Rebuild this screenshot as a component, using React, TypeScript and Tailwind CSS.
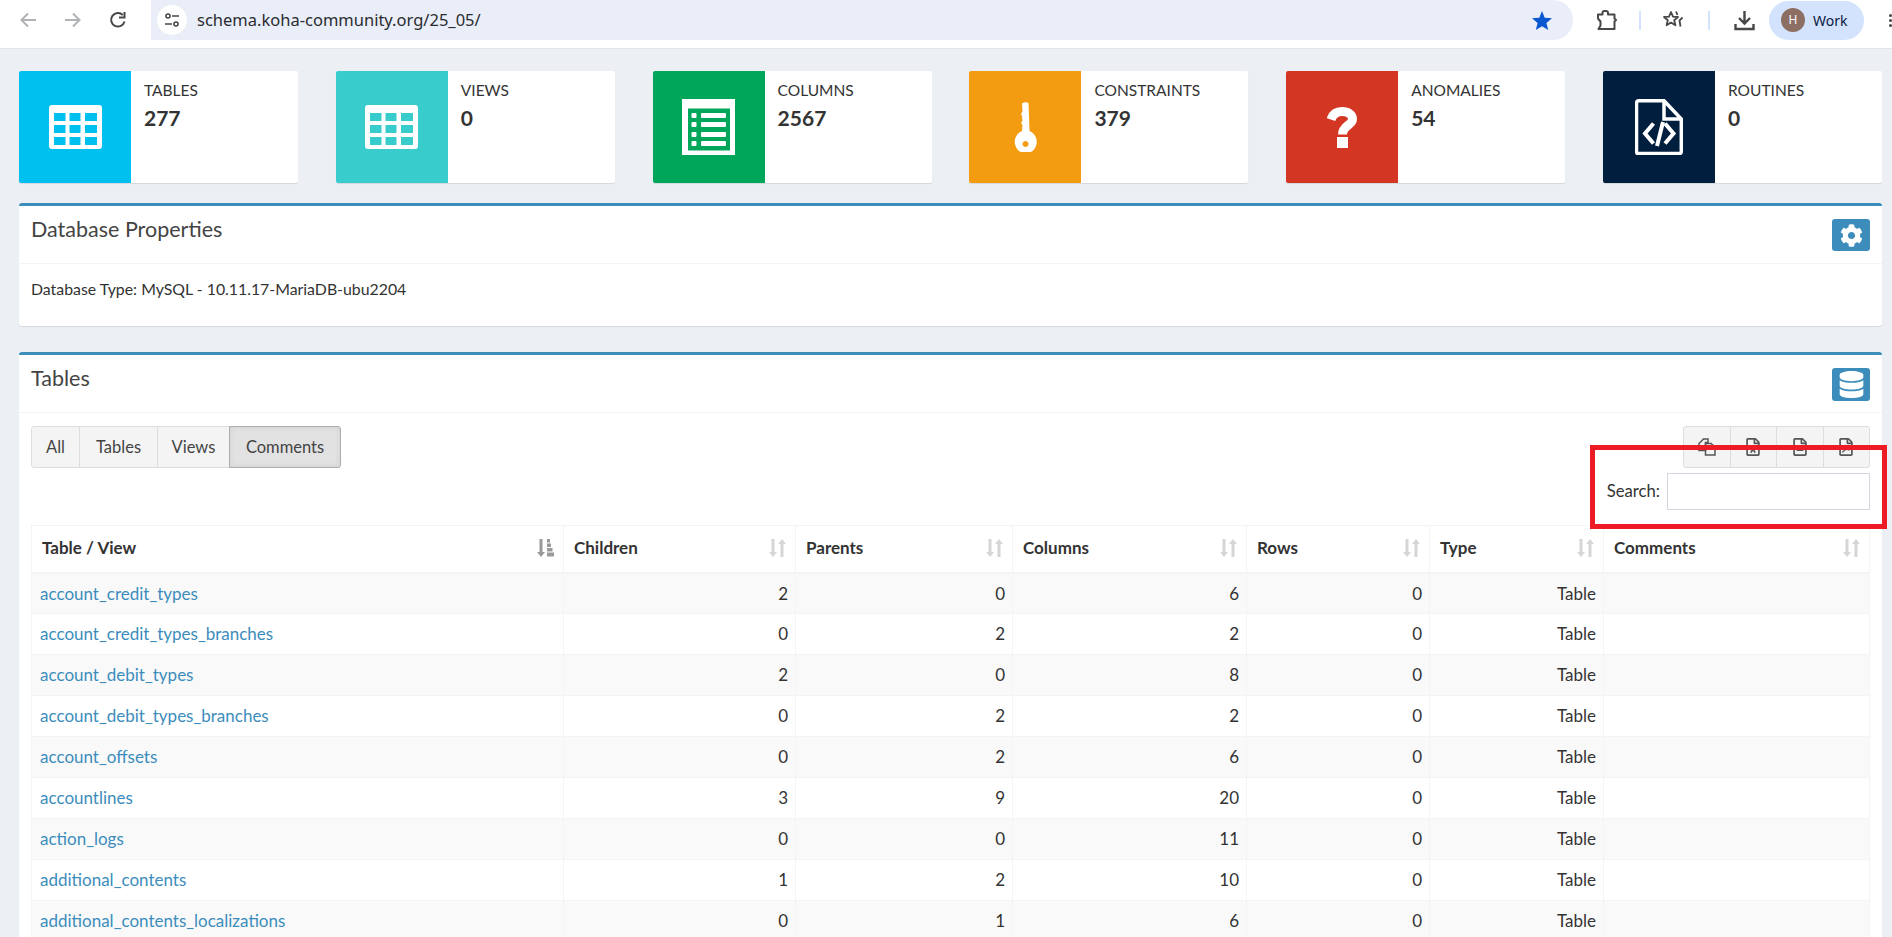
import React from "react";
import { FaCog, FaDatabase, FaRegFileExcel, FaRegFileAlt, FaRegFilePdf } from "react-icons/fa";

const font = "font-['Lato','Liberation_Sans',sans-serif]";

function TableIcon() {
  return (
    <svg width="53" height="44" viewBox="0 0 53 44" fill="#fff" fillRule="evenodd">
      <path d="M3 0h47a3 3 0 0 1 3 3v38a3 3 0 0 1-3 3H3a3 3 0 0 1-3-3V3a3 3 0 0 1 3-3zM5 8v8h11.500V8zM20.500 8v8h11V8zM36 8v8h12V8zM5 20v8h11.500v-8zM20.500 20v8h11v-8zM36 20v8h12v-8zM5 32v8h11.500v-8zM20.500 32v8h11v-8zM36 32v8h12v-8z" />
    </svg>
  );
}

function ListAlt() {
  return (
    <svg width="53" height="56" viewBox="0 0 53 56">
      <path fillRule="evenodd" fill="#fff" d="M0 0h53v56H0zM6 9.500V51.500h42V9.500z" />
      <g fill="#fff">
        <rect x="9.500" y="14" width="5" height="5" rx="1" /><rect x="19" y="14" width="25" height="5" rx="1" />
        <rect x="9.500" y="23" width="5" height="5" rx="1" /><rect x="19" y="23" width="25" height="5" rx="1" />
        <rect x="9.500" y="33" width="5" height="5" rx="1" /><rect x="19" y="33" width="25" height="5" rx="1" />
        <rect x="9.500" y="42" width="5" height="5" rx="1" /><rect x="19" y="42" width="25" height="5" rx="1" />
      </g>
    </svg>
  );
}

function KeyIcon() {
  return (
    <svg width="23" height="50" viewBox="0 0 23 50" fill="#fff" fillRule="evenodd">
      <path d="M8 1.500Q11 -0.500 14.500 1L15.500 29A11 11.500 0 1 1 8 29L8.500 23L7 21L8.500 18.500L8 14L7 12L8.500 9.500zM11.500 39a3 3 0 1 0 0.010 0z" />
    </svg>
  );
}

function QuestionIcon() {
  return (
    <svg width="30" height="41" viewBox="0 0 30 41" fill="none">
      <path d="M4 12.500C6 6.500 10 4.500 15 4.500C21 4.500 25.500 7.500 25.500 12C25.500 18.500 15.500 18 15.500 27.500" stroke="#fff" strokeWidth="9" />
      <rect x="10" y="30" width="11" height="11" fill="#fff" />
    </svg>
  );
}

function FileCodeIcon() {
  return (
    <svg width="48" height="56" viewBox="0 0 48 56" fill="none" stroke="#fff" strokeWidth="3.500">
      <path d="M4 1.700H29L46.300 20V52.500a2 2 0 0 1-2 2H3.500a2 2 0 0 1-2-2V4a2.500 2.500 0 0 1 2.500-2.300z" />
      <path d="M29 2V20H46" />
      <path d="M18.500 24.500L10 34.500L18.500 44.500M30 24.500L38.500 34.500L30 44.500" strokeWidth="4" />
      <path d="M28 23L22 47" strokeWidth="4" />
    </svg>
  );
}

function CopyIcon() {
  return (
    <svg width="18" height="18" viewBox="0 0 18 18" fill="none" stroke="#555" strokeWidth="1.500">
      <path d="M5.500 1H10V4.500H7.500V12.500H1V5.500z" />
      <path d="M7.500 5.500H13L17 9V17H7.500z" />
    </svg>
  );
}

const cards = [
  { label: "TABLES", value: "277", bg: "bg-[#00c0ef]", icon: <TableIcon /> },
  { label: "VIEWS", value: "0", bg: "bg-[#39cccc]", icon: <TableIcon /> },
  { label: "COLUMNS", value: "2567", bg: "bg-[#00a65a]", icon: <ListAlt /> },
  { label: "CONSTRAINTS", value: "379", bg: "bg-[#f39c12]", icon: <KeyIcon /> },
  { label: "ANOMALIES", value: "54", bg: "bg-[#d33724]", icon: <QuestionIcon /> },
  { label: "ROUTINES", value: "0", bg: "bg-[#001f3f]", icon: <FileCodeIcon /> },
];

const rows: [string, number, number, number, number][] = [
  ["account_credit_types", 2, 0, 6, 0],
  ["account_credit_types_branches", 0, 2, 2, 0],
  ["account_debit_types", 2, 0, 8, 0],
  ["account_debit_types_branches", 0, 2, 2, 0],
  ["account_offsets", 0, 2, 6, 0],
  ["accountlines", 3, 9, 20, 0],
  ["action_logs", 0, 0, 11, 0],
  ["additional_contents", 1, 2, 10, 0],
  ["additional_contents_localizations", 0, 1, 6, 0],
];

const headers = ["Table / View", "Children", "Parents", "Columns", "Rows", "Type", "Comments"];

function SortIcon({ active }: { active?: boolean }) {
  if (active) {
    return (
      <svg width="17" height="18" viewBox="0 0 17 18" fill="#9a9a9a" className="shrink-0">
        <path d="M2.500 0h3v13H8L4 18 0 13h2.500z" />
        <rect x="10" y="0" width="3" height="3.500" /><rect x="10" y="4.500" width="4" height="3.500" /><rect x="10" y="9" width="5.500" height="3.500" /><rect x="10" y="13.500" width="7" height="4" />
      </svg>
    );
  }
  return (
    <svg width="17" height="18" viewBox="0 0 17 18" fill="#d6d6d6" className="shrink-0">
      <path d="M2.500 0h3v13H8L4 18 0 13h2.500z" />
      <path d="M11.500 18h3V5H17L13 0 9 5h2.500z" />
    </svg>
  );
}

function Panel({ title, icon, boxH, children, className }: { title: string; icon: React.ReactNode; boxH: string; children: React.ReactNode; className?: string }) {
  return (
    <section className={`bg-white border-t-[3px] border-[#3c8dbc] rounded-[3px] shadow-[0_1px_1px_rgba(0,0,0,0.1)] ${className ?? ""}`}>
      <div className="h-[58px] border-b border-[#f4f4f4] flex justify-between pl-[12px] pr-[12px] pt-[9px]">
        <h3 className="text-[21.500px] leading-[28px] text-[#444]">{title}</h3>
        <div className={`w-[38px] ${boxH} mt-[4px] bg-[#3c8dbc] rounded-[3px] flex items-center justify-center`}>{icon}</div>
      </div>
      {children}
    </section>
  );
}

export default function App() {
  return (
    <div className={`h-[937px] overflow-hidden bg-[#ecf0f5] text-[#333] relative ${font}`}>
      {/* Browser bar */}
      <header className="h-[49px] bg-white border-b border-[#e3e5e8] flex items-start">
        <div className="w-[151px] h-[40px] flex items-center pl-[19px] gap-[27px]">
          <svg width="18" height="18" viewBox="0 0 18 18" fill="none" stroke="#b0b2b5" strokeWidth="2"><path d="M17 9H3M9 2.500L2.500 9L9 15.500" /></svg>
          <svg width="18" height="18" viewBox="0 0 18 18" fill="none" stroke="#b0b2b5" strokeWidth="2"><path d="M1 9H15M9 2.500L15.500 9L9 15.500" /></svg>
          <svg width="18" height="18" viewBox="0 0 18 18" fill="none" stroke="#474747" strokeWidth="2"><path d="M15.500 10.500A6.800 6.800 0 1 1 13.800 4" /><path d="M15.500 1V6.500H10" fill="none" /></svg>
        </div>
        <div className="w-[1422px] h-[40px] rounded-r-full rounded-bl-[20px] bg-[#e9eef8] flex items-center pl-[6px] pr-[21px]">
          <div className="w-[30px] h-[30px] rounded-full bg-white flex items-center justify-center">
            <svg width="16" height="16" viewBox="0 0 16 16" fill="none" stroke="#474747" strokeWidth="1.600">
              <circle cx="4" cy="4" r="2" /><path d="M8 4h7M1 12h7" /><circle cx="12" cy="12" r="2" />
            </svg>
          </div>
          <span className="ml-[10px] font-['Noto_Sans',sans-serif] text-[16.500px] text-[#2a2c30] flex-1">schema.koha-community.org/25_05/</span>
          <svg width="20" height="19" viewBox="0 0 20 19" fill="#0b57d0"><path d="M10 0l2.700 6.800 7.300.5-5.600 4.700 1.800 7L10 15.200 3.800 19l1.800-7L0 7.300l7.300-.5z" /></svg>
        </div>
        <div className="flex-1 h-[40px] flex items-center">
          <svg width="21" height="21" viewBox="0 0 21 21" fill="none" stroke="#474747" strokeWidth="2" className="ml-[23px]">
            <path d="M2 4.500H6.500V3a2 2 0 0 1 2-2H10a2 2 0 0 1 2 2V4.500H18.500V8.500L20 10L18.500 11.500V19H2.500L4.500 15.500V11.500L2 8.500z" strokeLinejoin="round" />
          </svg>
          <div className="w-[2px] h-[19px] bg-[#d3e3fd] ml-[22px]" />
          <svg width="22" height="20" viewBox="0 0 22 20" fill="none" stroke="#474747" strokeWidth="1.800" className="ml-[22px]">
            <path d="M8 2l2 4.600 5 .4-3.800 3.300 1.200 5L8 12.600 3.600 15.300l1.200-5L1 7l5-.4z" strokeLinejoin="round" />
            <path d="M13 1.500L14.500 5M19.500 7.500L16.500 10.500L17.500 16.500" />
          </svg>
          <div className="w-[2px] h-[19px] bg-[#d3e3fd] ml-[23px]" />
          <svg width="21" height="21" viewBox="0 0 21 21" fill="none" stroke="#474747" strokeWidth="2.400" className="ml-[24px]">
            <path d="M10.500 1V13M5 8L10.500 13.500L16 8" />
            <path d="M1.500 14V19H19.500V14" />
          </svg>
          <div className="ml-[14px] w-[95px] h-[39px] rounded-full bg-[#d3e3fd] flex items-center pl-[12px] gap-[8px]">
            <div className="w-[24px] h-[24px] rounded-full bg-[#8d6e63] text-white text-[12px] flex items-center justify-center font-['Noto_Sans',sans-serif]">H</div>
            <span className="font-['Noto_Sans',sans-serif] text-[14px] text-[#0a2045]">Work</span>
          </div>
          <div className="ml-[25px] flex flex-col gap-[2px]">
            <span className="w-[3px] h-[3px] bg-[#474747] rounded-full" />
            <span className="w-[3px] h-[3px] bg-[#474747] rounded-full" />
            <span className="w-[3px] h-[3px] bg-[#474747] rounded-full" />
          </div>
        </div>
      </header>

      <main className="pl-[19px] pr-[10px] pt-[22px]">
        {/* Info boxes */}
        <div className="flex gap-[37.800px]">
          {cards.map((c) => (
            <div key={c.label} className="w-[279px] h-[112px] bg-white rounded-[2px] shadow-[0_1px_1px_rgba(0,0,0,0.1)] flex overflow-hidden">
              <div className={`w-[112px] flex items-center justify-center ${c.bg}`}>{c.icon}</div>
              <div className="pl-[13px] pt-[8px]">
                <div className="text-[15.500px] leading-[22px] text-[#333]">{c.label}</div>
                <div className="text-[21px] leading-[28px] mt-[3px] font-bold text-[#333]">{c.value}</div>
              </div>
            </div>
          ))}
        </div>

        <Panel className="mt-[20px] h-[123px]" boxH="h-[32px]" title="Database Properties" icon={<FaCog size={23} color="#fff" />}>
          <p className="pl-[12px] pt-[14px] text-[15.850px] leading-[22px]">Database Type: MySQL - 10.11.17-MariaDB-ubu2204</p>
        </Panel>

        <Panel className="mt-[26px] h-[700px]" boxH="h-[33px]" title="Tables" icon={<FaDatabase size={27} color="#fff" />}>
          <div className="px-[12px] pt-[13px]">
            <div className="flex justify-between items-start h-[99px]">
              <div className="flex text-[16.500px] text-[#444] h-[42px]">
                <div className="w-[49px] flex items-center justify-center bg-[#f4f4f4] border border-[#ddd] rounded-l-[3px]">All</div>
                <div className="w-[79px] -ml-px flex items-center justify-center bg-[#f4f4f4] border border-[#ddd]">Tables</div>
                <div className="w-[73px] -ml-px flex items-center justify-center bg-[#f4f4f4] border border-[#ddd]">Views</div>
                <div className="w-[112px] -ml-px flex items-center justify-center bg-[#e2e2e2] border border-[#adadad] rounded-r-[3px] shadow-[inset_0_0_6px_rgba(0,0,0,0.08)]">Comments</div>
              </div>
              <div className="flex flex-col items-end">
                <div className="flex h-[42px] text-[#555]">
                  {[<CopyIcon key="a" />, <FaRegFileExcel size={18} key="b" />, <FaRegFileAlt size={18} key="c" />, <FaRegFilePdf size={18} key="d" />].map((ic, i) => (
                    <div key={i} className={`w-[47.500px] flex items-center justify-center bg-[#f4f4f4] border border-[#ddd] -ml-px first:ml-0 ${i === 0 ? "rounded-l-[3px]" : ""} ${i === 3 ? "rounded-r-[3px]" : ""}`}>{ic}</div>
                  ))}
                </div>
                <div className="flex items-center mt-[5px] text-[16.700px]">
                  <label className="mr-[7px]">Search:</label>
                  <input className="w-[203px] h-[37px] border border-[#d2d6de] bg-white" />
                </div>
              </div>
            </div>

            <table className="w-full table-fixed border-collapse text-[17px]">
              <colgroup>
                {[532, 232, 217, 234, 183, 174, 266].map((w, i) => <col key={i} style={{ width: w }} />)}
              </colgroup>
              <thead>
                <tr className="h-[47px]">
                  {headers.map((h, i) => (
                    <th key={h} className="border border-[#f4f4f4] border-b-[2px] pl-[10px] pr-[9px] pb-[2px] text-left font-bold text-[17px]">
                      <div className="flex items-center justify-between">
                        <span>{h}</span>
                        <SortIcon active={i === 0} />
                      </div>
                    </th>
                  ))}
                </tr>
              </thead>
              <tbody>
                {rows.map((r, idx) => (
                  <tr key={r[0]} className={`h-[41px] ${idx % 2 === 0 ? "bg-[#f9f9f9]" : "bg-white"}`}>
                    <td className="border border-[#f4f4f4] px-[8px] text-[#3c8dbc]">{r[0]}</td>
                    {r.slice(1).map((v, i) => (
                      <td key={i} className="border border-[#f4f4f4] px-[7px] text-right">{v}</td>
                    ))}
                    <td className="border border-[#f4f4f4] px-[7px] text-right">Table</td>
                    <td className="border border-[#f4f4f4] px-[7px]" />
                  </tr>
                ))}
              </tbody>
            </table>
          </div>
        </Panel>
      </main>

      {/* Red annotation rectangle drawn over the page */}
      <div className="absolute left-[1590px] top-[445px] w-[297px] h-[84px] border-[5px] border-[#ed1c24] pointer-events-none" />
    </div>
  );
}
